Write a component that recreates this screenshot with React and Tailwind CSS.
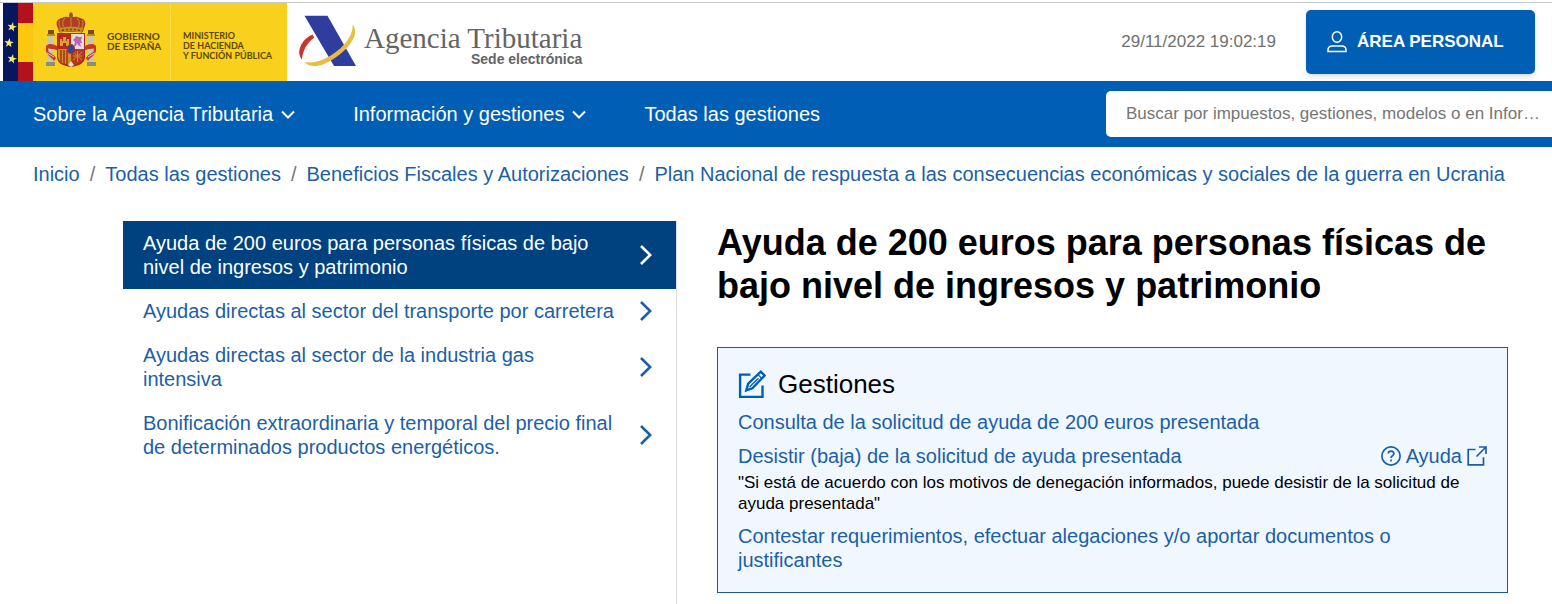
const STAR = "M0-5 1.2-1.6 4.8-1.5 1.9.6 2.9 4 0 2-2.9 4-1.9.6-4.8-1.5-1.2-1.6Z";

function GovernmentEmblem() {
  return (
    <svg width="98" height="78" viewBox="0 0 98 78" aria-hidden="true" className="shrink-0">
      <rect width="98" height="78" fill="#f9d01b" />
      <rect width="15" height="78" fill="#06165f" />
      <rect x="15" width="15" height="78" fill="#b3121c" />
      <rect x="15" y="20" width="15" height="39" fill="#fdc60f" />
      <g fill="#fbe56a">
        <path transform="translate(9 24) rotate(12)" d={STAR} />
        <path transform="translate(6 40) rotate(6)" d={STAR} />
        <path transform="translate(9 56) rotate(12)" d={STAR} />
      </g>
      {/* pillars */}
      <g>
        <rect x="44.500" y="32" width="6" height="27" fill="#c9c6a9" />
        <rect x="85" y="32" width="6" height="27" fill="#c9c6a9" />
        <path d="M45 27h6v4h-6zM85 27h6v4h-6z" fill="#7a4a17" />
        <path d="M44 31h8v2h-8zM84 31h8v2h-8z" fill="#b98b1a" />
        <path d="M43 59h9v4h-9zM84 59h9v4h-9z" fill="#8a8f7c" />
        <path d="M43 43c3-3 7-2 11 0v4c-4-1-8-2-9 1 2 3 6 3 8 7l-2 3c-2-4-7-5-8-10z" fill="#c4392c" />
        <path d="M93 43c-3-3-7-2-11 0v4c4-1 8-2 9 1-2 3-6 3-8 7l2 3c2-4 7-5 8-10z" fill="#c4392c" />
        <path d="M45 46l6 1M44 50l7 4M91 46l-6 1M92 50l-7 4" stroke="#e8d5b8" strokeWidth="1" />
      </g>
      {/* crown */}
      <path d="M55 25c-3-5-1-9 4-10 3-2 6-1 9-1s6-1 9 1c5 1 7 5 4 10l-1 4H56z" fill="#b3392a" />
      <path d="M68 14v12M62 15c-3 3-3 7 0 11M74 15c3 3 3 7 0 11M57 17c-2 3-1 6 1 9M79 17c2 3 1 6-1 9" fill="none" stroke="#b98222" strokeWidth="1.200" />
      <path d="M56 25c8-2 16-2 24 0l-1 5c-7-2-15-2-22 0z" fill="#c08a1c" />
      <path d="M59 27.500c6-1.500 12-1.500 18 0" fill="none" stroke="#8f2f22" strokeWidth="1.500" strokeDasharray="2 2" />
      <circle cx="68" cy="12.500" r="2" fill="#7c5a20" />
      <path d="M68 9v5M66.500 10.500h3" stroke="#8a5a18" strokeWidth="1" />
      {/* shield */}
      <path d="M54 30h28v24c0 6-6 9-14 10-8-1-14-4-14-10z" fill="#a62a22" />
      <path d="M55 31h13v15H55z" fill="#b62a1e" />
      <path d="M68 31h13v15H68z" fill="#e5dbe0" />
      <path d="M55 46h13v16c-8-1-13-3-13-9z" fill="#cf8f22" />
      <path d="M68 46h13v7c0 6-5 8-13 9z" fill="#b5381f" />
      <path d="M58 47v12M61 47v14M64 47v15" stroke="#a9321d" strokeWidth="1.500" />
      <path d="M57 43v-7h2v2h1v-4h3v4h1v-2h2v7z" fill="#dba32a" />
      <path d="M60 43v-3h3v3z" fill="#79351c" />
      <path d="M71 43l1-4-2-2 2-2 1-2 3 1 3 0-1 3 1 3-2 0 1 4-3-2-1-2-1 3z" fill="#b865ad" />
      <path d="M70 49l9 8M79 49l-9 8M70 53h9M74.500 48v11" stroke="#cf8d28" strokeWidth="1" />
      <ellipse cx="68" cy="46" rx="3.500" ry="4.500" fill="#39458e" stroke="#a33042" />
      <path d="M65 62l3-4 3 4-3 2z" fill="#e2dfc5" />
    </svg>
  );
}

function AgencyMark() {
  return (
    <svg width="58" height="54" viewBox="0 0 58 54" aria-hidden="true" className="shrink-0">
      <path d="M5.500.800H28.500L57 51H35z" fill="#2f3d9e" />
      <path d="M13.500 19.500C5 23 0 31 .200 38c.300 3 1.300 5 2.800 6.300C3.500 36 8 28 15.200 22.500z" fill="#c9362c" />
      <path d="M53.700 9.500c3 4 3.200 9 1 13.500C50 33 38 43.500 24 49.500 17 52 9 51.500 5.500 47c8 1.500 17-1 25-5.700C42 34.500 54 23 53.700 9.500z" fill="#e9bd45" />
    </svg>
  );
}

function UserIcon() {
  return (
    <svg width="20" height="22" viewBox="0 0 20 22" fill="none" stroke="currentColor" strokeWidth="1.500" aria-hidden="true">
      <ellipse cx="10" cy="6" rx="4.700" ry="5.200" />
      <path d="M1 20.500v-1.500c0-2.500 2-4 4.500-4h9c2.500 0 4.500 1.500 4.500 4v1.500z" />
    </svg>
  );
}

function DownIcon() {
  return (
    <svg width="14" height="10" viewBox="0 0 14 10" fill="none" stroke="currentColor" strokeWidth="2" aria-hidden="true">
      <path d="M1 2.500l6 6 6-6" />
    </svg>
  );
}

function RightIcon() {
  return (
    <svg width="12" height="20" viewBox="0 0 12 20" fill="none" stroke="currentColor" strokeWidth="2.600" aria-hidden="true" className="shrink-0">
      <path d="M1 1l9.200 9L1 19" />
    </svg>
  );
}

function EditIcon() {
  return (
    <svg width="28" height="28" viewBox="0 0 28 28" fill="none" stroke="#005eb5" strokeWidth="2.400" aria-hidden="true" className="shrink-0">
      <path d="M12.500 4.600H2.100v22.300h22.400V15.500" />
      <path d="M8.300 20.300l1.900-6.600L22.800 1.700l3.800 3.800L14.400 18.300z" />
      <path d="M20 4.600l4 4M20.500 8.200L11.500 17" strokeWidth="1.300" />
    </svg>
  );
}

function HelpIcon() {
  return (
    <svg width="20" height="20" viewBox="0 0 20 20" fill="none" stroke="currentColor" strokeWidth="1.700" aria-hidden="true">
      <circle cx="10" cy="10" r="9.100" />
      <path d="M7.300 7.600c0-3.400 5.600-3.400 5.600 0 0 2.200-2.900 2-2.900 4.400" />
      <path d="M10 13.500v2" />
    </svg>
  );
}

function ExternalIcon() {
  return (
    <svg width="20" height="20" viewBox="0 0 20 20" fill="none" stroke="currentColor" strokeWidth="1.700" aria-hidden="true">
      <path d="M8.500 3.500H1.200v15.300h15.300v-7.500M12 1h7v7M19 1L9.500 10.500" />
    </svg>
  );
}

const crumbs = [
  "Inicio",
  "Todas las gestiones",
  "Beneficios Fiscales y Autorizaciones",
  "Plan Nacional de respuesta a las consecuencias económicas y sociales de la guerra en Ucrania",
];

const sections = [
  "Ayuda de 200 euros para personas físicas de bajo nivel de ingresos y patrimonio",
  "Ayudas directas al sector del transporte por carretera",
  "Ayudas directas al sector de la industria gas intensiva",
  "Bonificación extraordinaria y temporal del precio final de determinados productos energéticos.",
];

export default function App() {
  return (
    <div className="flex min-h-screen flex-col overflow-x-hidden bg-white pt-[2px] font-['Liberation_Sans',Arial,sans-serif] text-xl leading-6 text-black">
      <header>
        <div className="flex items-center border-t border-[#c4c8cc] pr-[17px] pl-[3px]">
          <div className="flex bg-[#f9d01b] font-['Lato',sans-serif] leading-[10px] font-bold text-[#5c4708]">
            <GovernmentEmblem />
            <p className="w-[70px] border-r border-[#fbdc4c] pt-7 pl-[6px] text-[10px]">
              GOBIERNO
              <br />
              DE ESPAÑA
            </p>
            <p className="w-[116px] pt-7 pl-3 text-[9px]">
              MINISTERIO
              <br />
              DE HACIENDA
              <br />
              Y FUNCIÓN PÚBLICA
            </p>
          </div>
          <a href="#inicio" className="ml-3 flex items-center gap-[7px] text-[#636466]">
            <AgencyMark />
            <span className="flex flex-col items-end pt-[6px]">
              <span className="font-['Liberation_Serif',serif] text-[29px] leading-7">Agencia Tributaria</span>
              <span className="text-sm leading-[14px] font-bold">Sede electrónica</span>
            </span>
          </a>
          <time className="ml-auto text-[17px] text-[#707070]">29/11/2022 19:02:19</time>
          <button
            type="button"
            className="ml-[30px] flex h-16 w-[229px] items-center gap-[10px] rounded-[5px] bg-[#005eb5] pl-[21px] text-[17px] font-bold text-white shadow-md"
          >
            <UserIcon />
            ÁREA PERSONAL
          </button>
        </div>
        <nav className="flex h-[66px] items-center bg-[#005eb5] pl-[33px] text-white" aria-label="Principal">
          <button type="button" className="flex items-center gap-2">
            Sobre la Agencia Tributaria
            <DownIcon />
          </button>
          <button type="button" className="ml-[58px] flex items-center gap-2">
            Información y gestiones
            <DownIcon />
          </button>
          <a href="#todas" className="ml-[58px]">
            Todas las gestiones
          </a>
          <input
            type="text"
            aria-label="Buscar"
            placeholder="Buscar por impuestos, gestiones, modelos o en Información"
            className="ml-auto h-[46px] w-[446px] rounded-l-[5px] bg-white pr-3 pl-5 text-[17px] text-ellipsis text-black placeholder:text-[#757575]"
          />
        </nav>
      </header>

      <nav aria-label="Ruta de navegación" className="px-[33px] pt-[15px] text-[#1b5fa6]">
        <ol className="flex flex-wrap">
          {crumbs.map((label, i) => (
            <li key={label} className="flex">
              {i > 0 && <span className="px-[10px] text-[#757575]">/</span>}
              <a href="#ruta">{label}</a>
            </li>
          ))}
        </ol>
      </nav>

      <div className="flex flex-1 pt-[35px] pr-11 pl-[123px]">
        <aside className="w-2/5 border-r border-[#dcdfe4]">
          <ul>
            {sections.map((label, i) => (
              <li key={label}>
                <a
                  href="#seccion"
                  className={
                    i === 0
                      ? "flex items-center justify-between gap-6 bg-[#00417f] py-[10px] pr-6 pl-5 text-white"
                      : "flex items-center justify-between gap-6 py-[10px] pr-6 pl-5 text-[#1b5fa6]"
                  }
                >
                  {label}
                  <RightIcon />
                </a>
              </li>
            ))}
          </ul>
        </aside>

        <main className="w-3/5 pb-[11px] pl-10">
          <h1 className="text-4xl leading-[43px] font-bold">
            Ayuda de 200 euros para personas físicas de bajo nivel de ingresos y patrimonio
          </h1>
          <section className="mt-10 border border-[#1a5b8c] bg-[#f0f7ff] p-5 text-[#1b5fa6]">
            <h2 className="flex items-center gap-3 text-[26px] leading-8 text-black">
              <EditIcon />
              Gestiones
            </h2>
            <ul className="mt-[10px] flex flex-col gap-[10px]">
              <li>
                <a href="#consulta">Consulta de la solicitud de ayuda de 200 euros presentada</a>
              </li>
              <li>
                <div className="flex items-center justify-between">
                  <a href="#desistir">Desistir (baja) de la solicitud de ayuda presentada</a>
                  <a href="#ayuda" className="flex items-center gap-[5px]">
                    <HelpIcon />
                    Ayuda
                    <ExternalIcon />
                  </a>
                </div>
                <p className="mt-1 text-[17px] leading-[21px] text-black">
                  "Si está de acuerdo con los motivos de denegación informados, puede desistir de la solicitud de ayuda
                  presentada"
                </p>
              </li>
              <li>
                <a href="#contestar">
                  Contestar requerimientos, efectuar alegaciones y/o aportar documentos o justificantes
                </a>
              </li>
            </ul>
          </section>
        </main>
      </div>
    </div>
  );
}
